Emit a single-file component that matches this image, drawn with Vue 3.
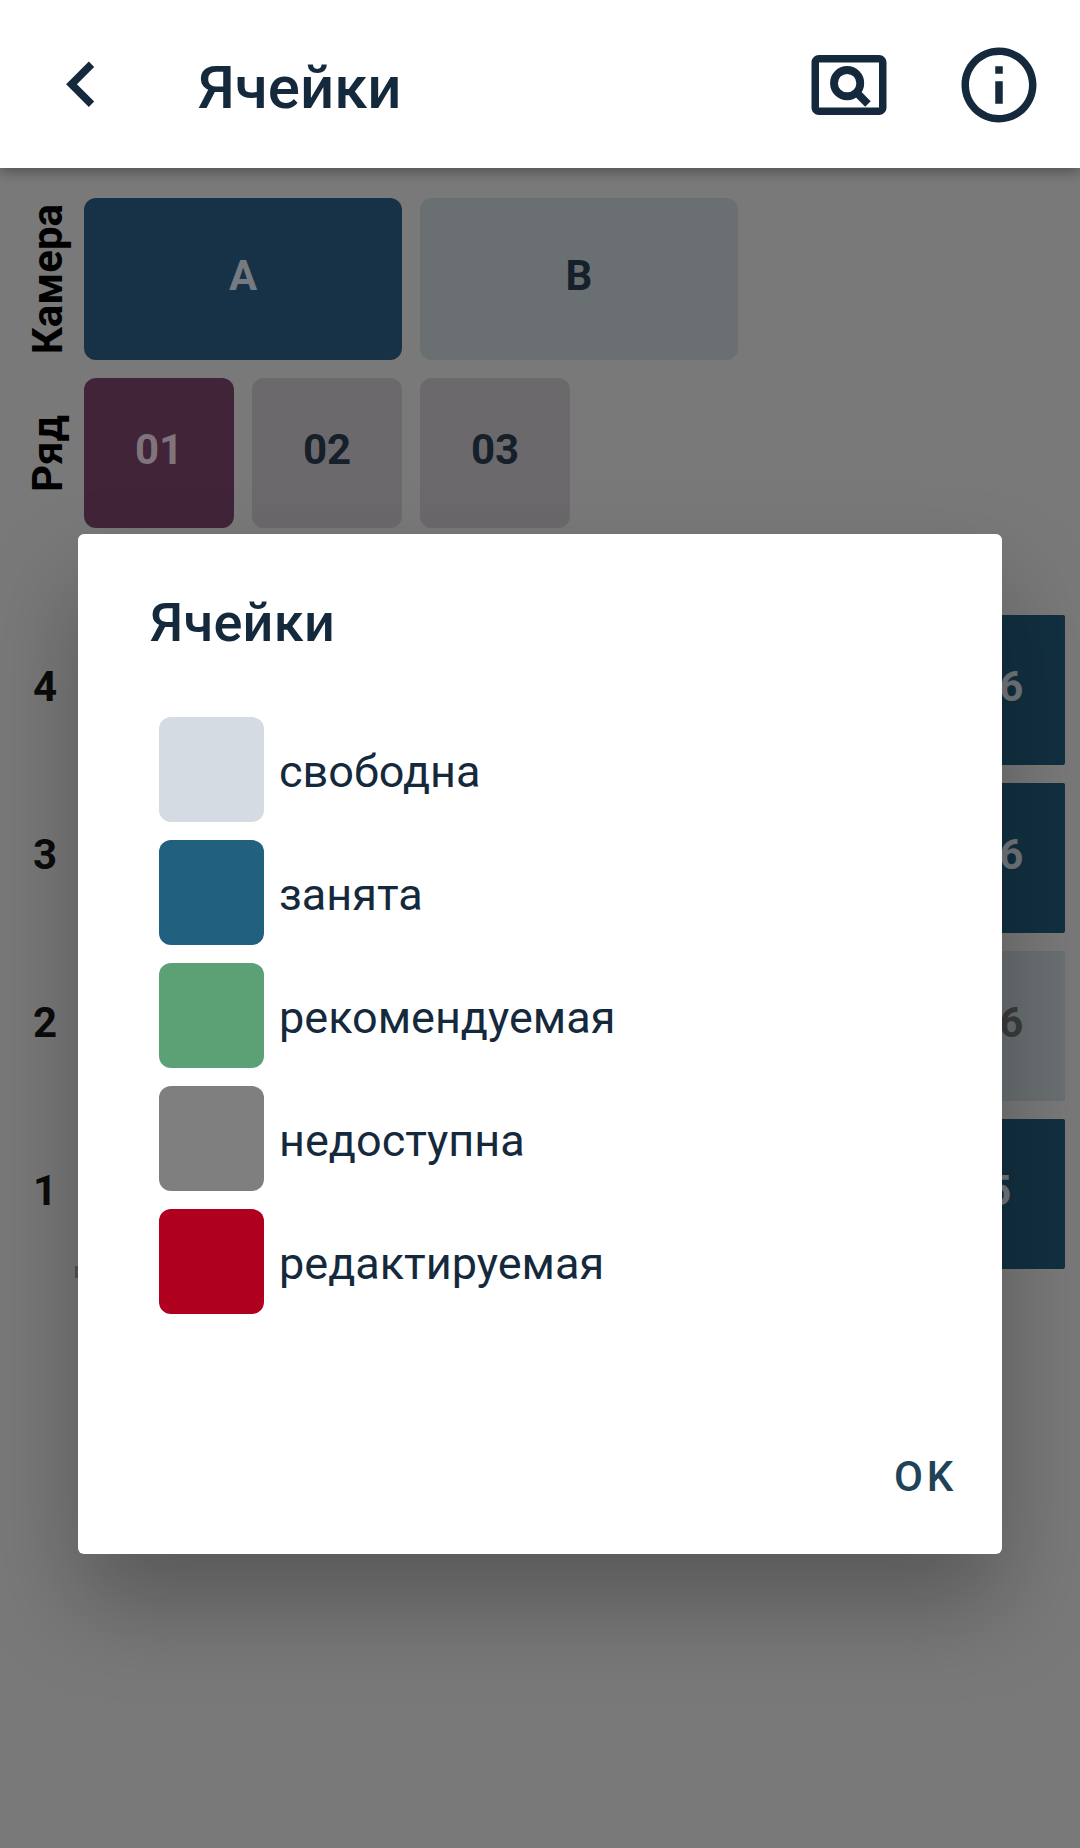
<script setup>
const cameras = [
  { label: 'A', active: true },
  { label: 'B', active: false },
]
const rows = [
  { label: '01', active: true },
  { label: '02', active: false },
  { label: '03', active: false },
]
const tiers = [
  { n: 4, cell: '1-6', free: false },
  { n: 3, cell: '1-6', free: false },
  { n: 2, cell: '1-6', free: true },
  { n: 1, cell: '-5', free: false },
]
const legend = [
  { name: 'свободна', kind: 'free' },
  { name: 'занята', kind: 'busy' },
  { name: 'рекомендуемая', kind: 'advised' },
  { name: 'недоступна', kind: 'blocked' },
  { name: 'редактируемая', kind: 'edited' },
]
</script>

<template>
  <div class="screen">
    <header class="bar">
      <svg class="back" viewBox="0 0 90 90"><path d="M59.500 25.200 L39.500 45.200 L59.500 65.200" fill="none" stroke="#15293c" stroke-width="7.600" /></svg>
      <h1>Ячейки</h1>
      <svg class="icon" viewBox="0 0 24 24">
        <path d="M20 4H4c-1.100 0-2 .9-2 2v12c0 1.100.9 2 2 2h16c1.100 0 2-.9 2-2V6c0-1.100-.9-2-2-2zm0 14H4V6h16v12z" />
        <circle cx="11.500" cy="11.500" r="3.500" fill="none" stroke="#15293c" stroke-width="2.080" />
        <path d="M13.800 13.800l3.250 3.250" stroke="#15293c" stroke-width="2.080" />
      </svg>
      <svg class="icon" viewBox="0 0 24 24">
        <path d="M11 7h2v2h-2zm0 4h2v6h-2zm1-9C6.480 2 2 6.480 2 12s4.480 10 10 10 10-4.480 10-10S17.520 2 12 2zm0 18c-4.410 0-8-3.590-8-8s3.590-8 8-8 8 3.590 8 8-3.590 8-8 8z" />
      </svg>
    </header>

    <main class="content">
      <section class="line cameras">
        <div class="side"><span>Камера</span></div>
        <div v-for="c in cameras" :key="c.label" class="tile wide" :class="{ active: c.active }">{{ c.label }}</div>
      </section>
      <section class="line rows">
        <div class="side"><span>Ряд</span></div>
        <div v-for="r in rows" :key="r.label" class="tile" :class="{ active: r.active }">{{ r.label }}</div>
      </section>
      <section class="grid">
        <div v-for="t in tiers" :key="t.n" class="tier">
          <b>{{ t.n }}</b>
          <div class="cell" :class="{ vacant: t.free }">{{ t.cell }}</div>
        </div>
        <div class="scrollbar"></div>
      </section>
    </main>

    <div class="dialog">
      <h2>Ячейки</h2>
      <ul>
        <li v-for="l in legend" :key="l.kind"><i :class="l.kind"></i><span>{{ l.name }}</span></li>
      </ul>
      <button>OK</button>
    </div>
  </div>
</template>

<style>
body { margin: 0; background: #797979; }
</style>

<style scoped>
.screen { position: relative; width: 1080px; height: 1848px; overflow: hidden; background: #797979; font-family: Roboto, "Liberation Sans", sans-serif; color: #15293c; }
.bar { position: relative; display: flex; align-items: center; box-sizing: border-box; height: 168px; padding: 0 36px; background: #fff; box-shadow: 0 4px 12px rgba(0, 0, 0, .32); }
.back { width: 90px; height: 90px; margin-left: -4px; }
.bar h1 { flex: 1; margin: 7px 0 0 76px; font-size: 60px; line-height: 70px; font-weight: 500; }
.icon { width: 90px; height: 90px; margin: 1px 0 0 60px; fill: #15293c; }
.line { display: flex; gap: 18px; }
.cameras { height: 162px; margin-top: 30px; }
.rows { height: 150px; margin-top: 18px; }
.side { width: 84px; margin-right: -18px; display: flex; align-items: center; justify-content: center; color: #000; font-size: 42px; font-weight: 700; }
.side span { writing-mode: vertical-rl; transform: rotate(180deg); line-height: 50px; margin: 1px 0 0 11px; }
.tile { width: 150px; display: flex; align-items: center; justify-content: center; box-sizing: border-box; padding-bottom: 8px; border-radius: 12px; font-size: 42px; font-weight: 700; color: #15202a; background: #6c696c; }
.tile.active { background: #412438; color: #80747c; }
.tile.wide { width: 318px; background: #6a6f72; padding-bottom: 8px; }
.tile.wide.active { background: #173147; color: #757b80; }
.grid { margin-top: 87px; display: flex; flex-direction: column; gap: 18px; }
.tier { display: flex; justify-content: space-between; height: 150px; padding-right: 15px; }
.tier b { width: 90px; line-height: 143px; text-align: center; font-size: 42px; color: #0b0b0b; }
.cell { width: 150px; box-sizing: border-box; padding-left: 2px; line-height: 143px; text-align: center; font-size: 42px; font-weight: 700; color: #72787c; background: #123041; border-radius: 2px; }
.cell.vacant { background: #6a6f72; color: #3b3c3d; }
.scrollbar { width: 900px; height: 12px; margin: -21px 0 0 75px; background: #565656; }
.dialog { position: absolute; left: 78px; top: 534px; width: 924px; height: 1020px; box-sizing: border-box; padding: 57px 37px 42px 72px; display: flex; flex-direction: column; background: #fff; border-radius: 6px; box-shadow: 0 50px 95px rgba(0, 0, 0, .27); }
.dialog h2 { margin: 0; font-size: 54px; line-height: 64px; font-weight: 500; letter-spacing: .3px; }
.dialog ul { list-style: none; margin: 62px 0 0 9px; padding: 0; display: flex; flex-direction: column; gap: 18px; }
.dialog li { display: flex; align-items: center; height: 105px; font-size: 45px; }
.dialog li i { width: 105px; height: 105px; border-radius: 12px; margin-right: 15px; }
.dialog li span { padding-top: 4px; }
.free { background: #d5dbe3; }
.busy { background: #22607f; }
.advised { background: #5ca175; }
.blocked { background: #7f7f7f; }
.edited { background: #b0001f; }
.dialog button { align-self: flex-end; margin-top: auto; border: 0; padding: 0 8px; background: none; font: 500 42px/70px Roboto, sans-serif; letter-spacing: 3.750px; color: #1f4359; }
</style>
